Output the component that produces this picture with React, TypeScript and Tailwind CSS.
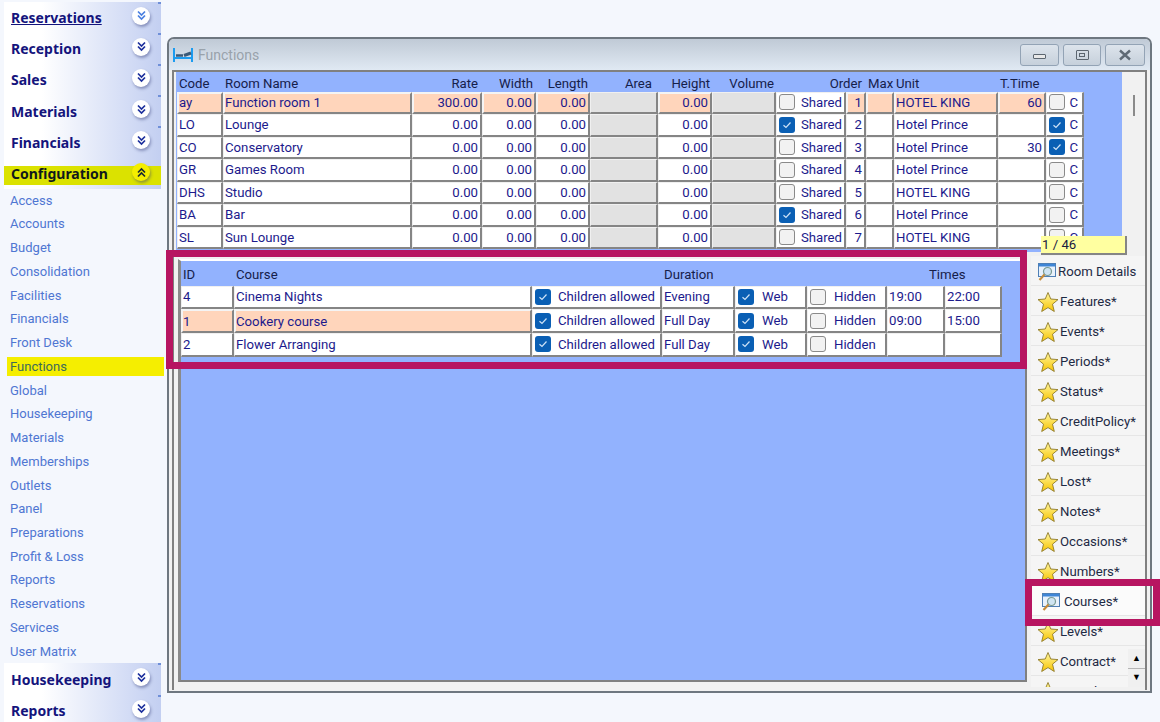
import React from 'react'

const font = "[font-family:Roboto,sans-serif]"
const boldFont = "[font-family:'Noto_Sans',sans-serif]"

const topSections = ['Reservations', 'Reception', 'Sales', 'Materials', 'Financials']
const links = ['Access', 'Accounts', 'Budget', 'Consolidation', 'Facilities', 'Financials', 'Front Desk', 'Functions', 'Global', 'Housekeeping', 'Materials', 'Memberships', 'Outlets', 'Panel', 'Preparations', 'Profit & Loss', 'Reports', 'Reservations', 'Services', 'User Matrix']

const rooms = [
  { code: 'ay', name: 'Function room 1', rate: '300.00', shared: false, order: '1', unit: 'HOTEL KING', time: '60', c: false },
  { code: 'LO', name: 'Lounge', rate: '0.00', shared: true, order: '2', unit: 'Hotel Prince', time: '', c: true },
  { code: 'CO', name: 'Conservatory', rate: '0.00', shared: false, order: '3', unit: 'Hotel Prince', time: '30', c: true },
  { code: 'GR', name: 'Games Room', rate: '0.00', shared: false, order: '4', unit: 'Hotel Prince', time: '', c: false },
  { code: 'DHS', name: 'Studio', rate: '0.00', shared: false, order: '5', unit: 'HOTEL KING', time: '', c: false },
  { code: 'BA', name: 'Bar', rate: '0.00', shared: true, order: '6', unit: 'Hotel Prince', time: '', c: false },
  { code: 'SL', name: 'Sun Lounge', rate: '0.00', shared: false, order: '7', unit: 'HOTEL KING', time: '', c: false },
]

const courses = [
  { id: '4', name: 'Cinema Nights', duration: 'Evening', from: '19:00', to: '22:00' },
  { id: '1', name: 'Cookery course', duration: 'Full Day', from: '09:00', to: '15:00', selected: true },
  { id: '2', name: 'Flower Arranging', duration: 'Full Day', from: '', to: '' },
]

const tabs = ['Room Details', 'Features*', 'Events*', 'Periods*', 'Status*', 'CreditPolicy*', 'Meetings*', 'Lost*', 'Notes*', 'Occasions*', 'Numbers*', 'Courses*', 'Levels*', 'Contract*', 'Rentals*']

const Chevrons = ({ up, tone = '#1c2f9c', bg = 'bg-white', className = '' }: { up?: boolean; tone?: string; bg?: string; className?: string }) => (
  <div className={`flex h-[18px] w-[18px] items-center justify-center rounded-full ${bg} shadow-[1px_2px_3px_rgba(50,60,120,0.45)] ${className}`}>
    <svg width="11" height="11" viewBox="0 0 11 11" fill="none" stroke={tone} strokeWidth="1.7">
      {up ? (
        <path d="M2 5.5 5.5 2 9 5.5M2 9.5 5.5 6 9 9.5" />
      ) : (
        <path d="M2 1.5 5.5 5 9 1.5M2 5.5 5.5 9 9 5.5" />
      )}
    </svg>
  </div>
)

const SectionHeader = ({ label, underline, tone }: { label: string; underline?: boolean; tone?: string }) => (
  <div className="relative ml-1 flex h-[31.2px] items-center justify-between bg-gradient-to-r from-white from-[24%] to-[#c3cff1] pl-[7px] pr-[11px]">
    <span className={`pt-px text-[14px] font-bold text-[#14147c] ${boldFont} ${underline ? 'underline' : ''}`}>{label}</span>
    <Chevrons tone={tone} className="mb-[3px]" />
    <div className="absolute right-0 top-0 h-[2px] w-[3px] bg-[#6f8fd8]" />
  </div>
)

const Check = ({ on }: { on?: boolean }) =>
  on ? (
    <div className="flex h-4 w-4 shrink-0 items-center justify-center rounded-[3px] bg-[#0a5fb4]">
      <svg width="10" height="10" viewBox="0 0 10 10" fill="none" stroke="#cfe3f7" strokeWidth="1.2">
        <path d="M1.5 5.2 4 7.5 8.5 2.5" />
      </svg>
    </div>
  ) : (
    <div className="h-4 w-4 shrink-0 rounded-[3px] border border-[#8a8a8a] bg-[#f2f2f2]" />
  )

const Cell = ({ children, sel, gray, right, className = '' }: { children?: React.ReactNode; sel?: boolean; gray?: boolean; right?: boolean; className?: string }) => (
  <div
    className={`flex items-center overflow-hidden whitespace-nowrap border-b-2 border-r-2 border-b-[#858585] border-r-[#858585] pr-[2px] text-[#1c1a8c] ${right ? 'justify-end' : ''} ${gray ? 'border-l border-t border-l-[#f0f0f0] border-t-[#f0f0f0] bg-[#e2e2e2] pl-px' : sel ? 'border-l-2 border-t-2 border-l-[#f4f4f4] border-t-[#f4f4f4] bg-[#ffd5bb]' : 'border-l border-t border-l-[#f0f0f0] border-t-[#f0f0f0] bg-white pl-px'} ${className}`}
  >
    {children}
  </div>
)

const HeadCell = ({ children, right, className = '' }: { children?: React.ReactNode; right?: boolean; className?: string }) => (
  <div className={`flex items-center whitespace-nowrap px-[2px] pt-[2px] text-[#16204a] ${right ? 'justify-end' : ''} ${className}`}>{children}</div>
)

const Star = () => (
  <svg width="22" height="22" viewBox="0 0 22 22" className="shrink-0">
    <defs>
      <linearGradient id="gold" x1="0" y1="0" x2="0" y2="1">
        <stop offset="0" stopColor="#fff7a0" />
        <stop offset="1" stopColor="#f8c400" />
      </linearGradient>
    </defs>
    <path d="M11 1.5 13.8 8 21 8.6 15.5 13.2 17.3 20.5 11 16.6 4.700 20.500 6.500 13.200 1 8.600 8.200 8Z" fill="url(#gold)" stroke="#8f7a2a" strokeWidth="0.9" />
  </svg>
)

const DetailsIcon = () => (
  <svg width="20" height="20" viewBox="0 0 20 20" className="shrink-0">
    <rect x="1.500" y="1.500" width="17" height="13" fill="#e8f1fb" stroke="#4f7fb5" />
    <rect x="2" y="2" width="16" height="2.500" fill="#3f86d6" />
    <circle cx="10.500" cy="9.500" r="4" fill="#cfe4f2" stroke="#7a9a92" strokeWidth="1.200" />
    <path d="M7.500 12.500 2.500 18" stroke="#c58b3a" strokeWidth="2.200" />
  </svg>
)

const Caption = ({ children, width }: { children: React.ReactNode; width: string }) => (
  <button className={`flex h-[22px] items-center justify-center rounded-[3px] border border-[#93a3b5] bg-gradient-to-b from-[#dde4ec] to-[#c6d0db] ${width}`}>{children}</button>
)

export default function App() {
  return (
    <div className={`relative flex h-[722px] w-[1160px] overflow-hidden bg-[#f4f7fd] text-[13.2px] ${font}`}>
      <aside className="w-[161px] shrink-0 pt-[1.5px]">
        {topSections.map((s, i) => (
          <SectionHeader key={s} label={s} underline={i === 0} tone={i === 0 ? '#4a7fe0' : undefined} />
        ))}
        <div className="ml-1 flex h-[31.2px] items-end bg-gradient-to-r from-white from-[24%] to-[#c3cff1] pb-[4px]">
          <div className="flex h-[19px] w-full items-center justify-between bg-[#dbe200] pl-[7px] pr-[11px]">
            <span className={`pb-[3px] text-[14px] font-bold text-[#10181c] ${boldFont}`}>Configuration</span>
            <Chevrons up tone="#1a2a30" bg="bg-[#f4ee00]" className="mb-[6px]" />
          </div>
        </div>
        {links.map((l) => (
          <div key={l} className="flex h-[23.74px] items-center text-[13px]">
            {l === 'Functions' ? (
              <span className="ml-[7px] flex h-[19px] w-[157px] shrink-0 items-center bg-[#f5ee00] pl-[3px] text-[#3d6a5a]">{l}</span>
            ) : (
              <span className="pl-[10px] text-[#4f76d2]">{l}</span>
            )}
          </div>
        ))}
        <SectionHeader label="Housekeeping" />
        <SectionHeader label="Reports" />
      </aside>

      <main className="pl-[6px] pt-[37px]">
        <div className="flex h-[656px] w-[985px] flex-col rounded-t-[7px] border-2 border-[#6e7780] bg-[#f1f1f1]">
          <div className="flex h-[31px] shrink-0 items-center justify-between rounded-t-[5px] bg-gradient-to-b from-[#c0cad6] to-[#e0e9f3] pl-[4px] pr-[5px]">
            <div className="flex items-center gap-[5px]">
              <svg width="20" height="16" viewBox="0 0 20 16" fill="none" stroke="#1c9cf0" strokeWidth="2">
                <path d="M1 1v14M19 1v14M1 11h18" />
                <path d="M3 8.500h7" stroke="#3a5a78" strokeWidth="2.500" />
                <path d="M11 8.500 18 6" stroke="#3a5a78" strokeWidth="3" />
              </svg>
              <span className="pt-px text-[14px] text-[#99a2ab]">Functions</span>
            </div>
            <div className="flex gap-[4px]">
              <Caption width="w-[39px]"><div className="mt-[3px] h-[5px] w-[13px] rounded-[1px] border border-[#5c6670] bg-[#e8e8e8]" /></Caption>
              <Caption width="w-[38px]"><div className="flex h-[10px] w-[13px] items-center justify-center rounded-[1px] border border-[#5c6670]"><div className="h-[4px] w-[6px] border border-[#5c6670]" /></div></Caption>
              <Caption width="w-[40px]">
                <svg width="14" height="12" viewBox="0 0 14 12" stroke="#5f6a75" strokeWidth="2.400" fill="none"><path d="M2 1.500 12 10.500M12 1.500 2 10.500" /></svg>
              </Caption>
            </div>
          </div>

          <div className="mx-[3px] flex h-[620px] flex-col border-2 border-b-0 border-[#808080] bg-[#f1f1f1]">
            {/* rooms grid */}
            <div className="flex h-[180px] shrink-0 overflow-hidden">
              <div className="ml-[2px] w-[946px] bg-[#92b2fe] pl-px pt-px">
                <div className="grid grid-cols-[46px_189px_70px_54px_54px_68px_54px_64px_70px_20px_28px_104px_48px_38px] grid-rows-[18.500px_repeat(8,22.500px)] leading-none">
                  <HeadCell>Code</HeadCell>
                  <HeadCell>Room Name</HeadCell>
                  <HeadCell right className="!pr-[4px]">Rate</HeadCell>
                  <HeadCell right className="!pr-[3px]">Width</HeadCell>
                  <HeadCell right>Length</HeadCell>
                  <HeadCell right className="!pr-[6px]">Area</HeadCell>
                  <HeadCell right>Height</HeadCell>
                  <HeadCell right>Volume</HeadCell>
                  <HeadCell right className="col-span-2 !pr-[4px]">Order</HeadCell>
                  <HeadCell>Max</HeadCell>
                  <HeadCell>Unit</HeadCell>
                  <HeadCell>T.Time</HeadCell>
                  <div />
                  {rooms.map((r, i) => {
                    const sel = i === 0
                    return (
                      <React.Fragment key={r.code}>
                        <Cell sel={sel}>{r.code}</Cell>
                        <Cell sel={sel}>{r.name}</Cell>
                        <Cell sel={sel} right>{r.rate}</Cell>
                        <Cell sel={sel} right>0.00</Cell>
                        <Cell sel={sel} right>0.00</Cell>
                        <Cell gray />
                        <Cell sel={sel} right>0.00</Cell>
                        <Cell gray />
                        <Cell className="gap-[6px] !pl-[2px]"><Check on={r.shared} />Shared</Cell>
                        <Cell sel={sel} right>{r.order}</Cell>
                        <Cell sel={sel} />
                        <Cell sel={sel}>{r.unit}</Cell>
                        <Cell sel={sel} right>{r.time}</Cell>
                        <Cell className="justify-between !pl-[2px] !pr-[4px]"><Check on={r.c} />C</Cell>
                      </React.Fragment>
                    )
                  })}
                </div>
              </div>
              <div className="flex flex-1 justify-center pl-px pt-[23px]">
                <div className="h-[21px] w-[2px] bg-[#8a8a8a]" />
              </div>
            </div>

            <div className="flex min-h-0 flex-1">
              {/* courses grid */}
              <div className="ml-[4px] mt-[7px] h-[423px] w-[849px] shrink-0 border-b-2 border-l-[3px] border-r-2 border-t-2 border-b-[#808080] border-l-[#8a8a8a] border-r-[#808080] border-t-white bg-[#92b2fe]">
                <div className="grid grid-cols-[53px_298px_130px_73px_72px_80px_58px_57px] grid-rows-[24.500px_repeat(3,23.800px)] leading-none">
                  <HeadCell>ID</HeadCell>
                  <HeadCell>Course</HeadCell>
                  <div />
                  <HeadCell>Duration</HeadCell>
                  <div />
                  <div />
                  <div className="col-span-2 flex items-center pl-[42px] pt-[2px] text-[#16204a]">Times</div>
                  {courses.map((c) => (
                    <React.Fragment key={c.id}>
                      <Cell sel={c.selected}>{c.id}</Cell>
                      <Cell sel={c.selected}>{c.name}</Cell>
                      <Cell className="gap-[7px] !pl-[2px]"><Check on />Children allowed</Cell>
                      <Cell>{c.duration}</Cell>
                      <Cell className="gap-[8px] !pl-[2px]"><Check on />Web</Cell>
                      <Cell className="gap-[8px] !pl-[2px]"><Check />Hidden</Cell>
                      <Cell>{c.from}</Cell>
                      <Cell>{c.to}</Cell>
                    </React.Fragment>
                  ))}
                </div>
              </div>

              {/* side tabs */}
              <div className="relative ml-[4px] mt-[4px] h-[431px] min-w-0 flex-1 overflow-hidden">
                {tabs.map((t, i) => (
                  <div
                    key={t}
                    className={`flex h-[30px] items-center border-b border-[#e6e6e6] pt-[2px] text-[#1e2a44] ${t === 'Courses*' ? 'gap-[3px] bg-[#fbfbfb] pl-[10px]' : 'gap-px bg-[#f5f5f5] pl-[6px]'}`}
                  >
                    {i === 0 || t === 'Courses*' ? <DetailsIcon /> : <Star />}
                    {t}
                  </div>
                ))}
                <div className="absolute right-0 top-[393px] flex h-[38px] w-[17px] flex-col gap-px bg-[#b5b5b5]">
                  <div className="flex flex-1 items-center justify-center bg-[#f0f0f0] text-[9px] leading-none text-black">▲</div>
                  <div className="flex flex-1 items-center justify-center bg-[#f0f0f0] text-[9px] leading-none text-black">▼</div>
                </div>
              </div>
            </div>
          </div>
        </div>
      </main>

      {/* record count tooltip and the callout boxes drawn over the screenshot */}
      <div className="absolute left-[1041px] top-[236px] flex h-[19px] w-[86px] items-center border-b-2 border-r-2 border-[#858585] bg-[#ffffa0] pl-px text-[#1a2040]">1 / 46</div>
      <div className="absolute left-[166px] top-[250px] h-[119px] w-[861px] border-[7px] border-[#b71561]" />
      <div className="absolute left-[1025px] top-[579px] h-[47px] w-[135px] border-[7px] border-[#b71561]" />
    </div>
  )
}
